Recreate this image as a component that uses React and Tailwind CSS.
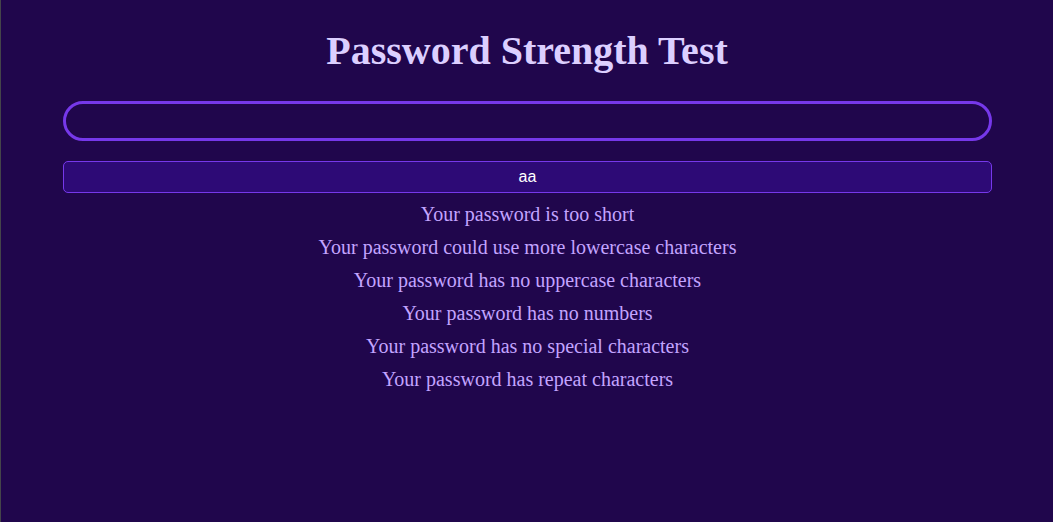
export default function App() {
  const messages = [
    "Your password is too short",
    "Your password could use more lowercase characters",
    "Your password has no uppercase characters",
    "Your password has no numbers",
    "Your password has no special characters",
    "Your password has repeat characters",
  ];
  return (
    <div className="min-h-[522px] w-full bg-[#20064c] border-l border-[#44444a] flex flex-col items-center" style={{ fontFamily: '"Liberation Serif", serif' }}>
      <h1 className="mt-[28px] text-[40px] leading-[46px] font-bold text-[#dccfff]">Password Strength Test</h1>
      <div className="w-[929px] ml-[1px] mt-[27px] flex flex-col">
        <input
          type="text"
          className="h-[40px] w-full rounded-full border-[3px] border-[#7638ea] bg-[#20064c] outline-none px-4 text-white"
        />
        <button
          className="mt-[20px] h-[32px] w-full rounded-[5px] border border-[#7638ea] bg-[#2d0a76] text-white text-[16px]"
          style={{ fontFamily: '"Liberation Sans", Arial, sans-serif' }}
        >
          aa
        </button>
        <div className="mt-[5px] flex flex-col items-center">
          {messages.map((m) => (
            <p key={m} className="text-[20px] leading-[33px] text-[#c3a4ff]">{m}</p>
          ))}
        </div>
      </div>
    </div>
  );
}
